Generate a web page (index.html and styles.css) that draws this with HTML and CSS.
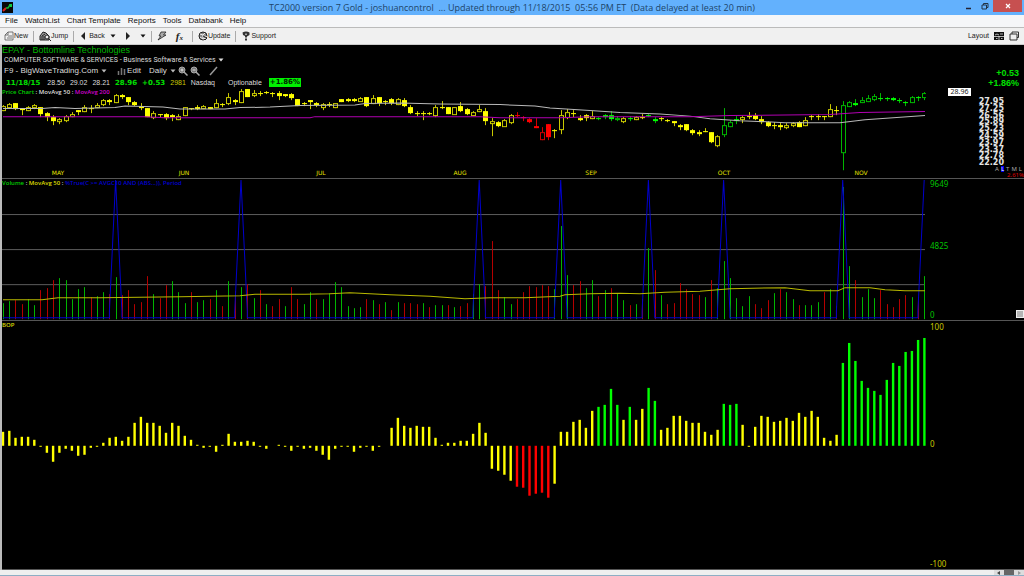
FILE: index.html
```html
<!DOCTYPE html>
<html lang="en">
<head>
<meta charset="utf-8">
<title>TC2000 version 7 Gold</title>
<link rel="stylesheet" href="styles.css">
</head>
<body>
<div class="window">
  <header class="titlebar">
    <svg class="app-icon" viewBox="0 0 11 11"><rect width="11" height="11" fill="#080808"/><path d="M1 9L4 6" stroke="#d22" stroke-width="2"/><path d="M4 6h2l2-3" stroke="#1b3" stroke-width="1.500" fill="none"/><path d="M7 2h3v3H8z" fill="#1c4"/></svg>
    <h1 class="title">TC2000 version 7 Gold - joshuancontrol &nbsp;... Updated through 11/18/2015 &nbsp;05:56 PM ET &nbsp;(Data delayed at least 20 min)</h1>
    <div class="window-buttons">
      <button class="win-btn" aria-label="Minimize"><svg viewBox="0 0 8 8"><path d="M1 6.500h5" stroke="#223" stroke-width="1.500"/></svg></button>
      <button class="win-btn" aria-label="Restore"><svg viewBox="0 0 8 8"><path d="M1 3h4.500v4H1zM2.500 3V1.500H7V5.500H5.500" fill="none" stroke="#234"/></svg></button>
      <button class="win-btn close" aria-label="Close"><svg viewBox="0 0 8 8"><path d="M2 2l4 4M6 2l-4 4" stroke="#fff" stroke-width="1.200"/></svg></button>
    </div>
  </header>

  <nav class="menubar">
    <button>File</button><button>WatchList</button><button>Chart Template</button><button>Reports</button><button>Tools</button><button>Databank</button><button>Help</button>
  </nav>

  <div class="toolbar">
    <button><svg class="ico" viewBox="0 0 10 10"><path d="M4 1h5v8H1V4zM4 1v3H1M4 5h4M3 7h5" fill="none" stroke="#555" stroke-width=".8"/></svg>New</button>
    <i class="sep"></i>
    <button><svg class="ico wide" viewBox="0 0 12 10"><path d="M1 5l3-4 3 1 3 3v4H1zM3 9V5l3-2M5 9V5" fill="#999" stroke="#222"/><circle cx="8" cy="6" r="2" fill="#eee" stroke="#222"/><path d="M9.500 7.500L12 10" stroke="#222"/></svg>Jump</button>
    <i class="sep"></i>
    <button><svg class="ico" viewBox="0 0 10 10"><path d="M6 1L2 5l4 4z" fill="#222"/></svg>Back</button>
    <button aria-label="Back history"><svg class="caret" viewBox="0 0 6 4"><path d="M.5.5h5L3 3.500z" fill="#111"/></svg></button>
    <button class="forward" aria-label="Forward"><svg class="ico" viewBox="0 0 10 10"><path d="M3 1l4 4-4 4z" fill="#222"/></svg></button>
    <button aria-label="Forward history"><svg class="caret" viewBox="0 0 6 4"><path d="M.5.5h5L3 3.500z" fill="#111"/></svg></button>
    <i class="sep"></i>
    <button aria-label="Alerts"><svg class="ico" viewBox="0 0 10 10"><path d="M4 1h5L6.500 4H9L1 9l3-4H2z" fill="#aaa" stroke="#222" stroke-width=".8"/></svg></button>
    <button class="fx" aria-label="Formula"><em>f<sub>x</sub></em></button>
    <i class="sep"></i>
    <button><svg class="ico" viewBox="0 0 10 10"><circle cx="5" cy="5" r="4" fill="#888" stroke="#222"/><path d="M2 3l3 1 2-2M2 6l3 2 3-1M5 4v4M6 5l4 1-2 3" stroke="#eee" fill="none"/><path d="M5 5l4 2-2 2" stroke="#222" fill="none"/></svg>Update</button>
    <i class="sep"></i>
    <button><svg class="ico" viewBox="0 0 10 10"><path d="M1.500 1.500Q5-.5 8.500 1.500V4L6 5.500v1H4V5L2 4z" fill="#333"/><path d="M4 3.200h2" stroke="#ddd"/><path d="M4 7.500h2v2H4z" fill="#333"/></svg>Support</button>
    <div class="toolbar-right">
      <button>Layout</button>
      <button aria-label="Layout grid"><svg class="ico" viewBox="0 0 10 10"><path d="M0 1h10v8H0z" fill="#111"/><path d="M5 5v4M0 5.500h10M1 4l2-1 2 1M6 3h3M2 7.500h1.500M7 7.500h1.500" stroke="#ddd" stroke-width=".8" fill="none"/></svg></button>
      <button aria-label="New window"><svg class="ico" viewBox="0 0 10 10"><path d="M1 3h7v6H1zM3 3V1h6.500v5.500H8" fill="none" stroke="#333"/></svg></button>
    </div>
  </div>

  <main class="workspace">
    <section class="panel price">
      <svg class="plot" id="price-plot" viewBox="2 45 924 133" preserveAspectRatio="none"></svg>
      <div class="info">
        <h2 class="company">EPAY - Bottomline Technologies</h2>
        <button class="industry">COMPUTER SOFTWARE &amp; SERVICES - Business Software &amp; Services <svg class="caret" viewBox="0 0 6 4"><path d="M.5.5h5L3 3.500z" fill="#ddd"/></svg></button>
        <div class="template-row">
          <button>F9 - BigWaveTrading.Com <svg class="caret" viewBox="0 0 6 4"><path d="M.5.5h5L3 3.500z" fill="#bbb"/></svg></button>
          <button class="edit"><svg class="ico" viewBox="0 0 10 10"><path d="M2.500 9V5M5.500 9V2M8.500 9V3" stroke="#777" stroke-width="1.500"/></svg>Edit</button>
          <button>Daily <svg class="caret" viewBox="0 0 6 4"><path d="M.5.5h5L3 3.500z" fill="#bbb"/></svg></button>
          <button aria-label="Zoom in"><svg class="ico" viewBox="0 0 10 10"><circle cx="4" cy="4" r="3" fill="#777" stroke="#aaa"/><path d="M6 6l3.500 3.500" stroke="#aaa" stroke-width="1.500"/><path d="M2.500 4h3M4 2.500v3" stroke="#ddd"/></svg></button>
          <button aria-label="Zoom out"><svg class="ico" viewBox="0 0 10 10"><circle cx="4" cy="4" r="3" fill="#777" stroke="#aaa"/><path d="M6 6l3.500 3.500" stroke="#aaa" stroke-width="1.500"/><path d="M2.500 4h3" stroke="#ddd"/></svg></button>
          <button class="draw" aria-label="Draw"><svg class="ico" viewBox="0 0 10 10"><path d="M2 9l7-8" stroke="#999" stroke-width="1.500"/></svg></button>
        </div>
        <div class="quote">
          <b class="up date">11/18/15</b><span>28.50</span><span>29.02</span><span>28.21</span><b class="up">28.96</b><b class="up">+0.53</b><span class="vol">2981</span><span>Nasdaq</span><span class="optionable">Optionable</span><b class="badge">+1.86%</b>
        </div>
        <div class="legend"><span class="green">Price Chart</span> : MovAvg 50 : <span class="magenta">MovAvg 200</span></div>
      </div>
      <div class="months" id="months"></div>
      <div class="axis price-axis">
        <div class="change"><span>+0.53</span><span>+1.86%</span></div>
        <div><span class="last">28.96</span></div>
        <div class="scale"><span>27.95</span><span>27.25</span><span>26.56</span><span>25.89</span><span>25.23</span><span>24.59</span><span>23.97</span><span>23.37</span><span>22.78</span><span>22.20</span></div>
        <div class="modes"><span>A</span><span class="on">L</span><span>T</span><span>M</span><span>L</span></div>
        <div class="pct">2.61%</div>
      </div>
    </section>

    <section class="panel volume">
      <svg class="plot" id="volume-plot" viewBox="2 179 924 141" preserveAspectRatio="none"></svg>
      <div class="legend"><span class="green">Volume</span> : <span class="yellow">MovAvg 50</span> : <span class="blue">%True(C &gt;= AVGC10 AND (ABS...)), Period</span></div>
      <div class="axis volume-axis"><span>9649</span><span class="middle">4825</span><span class="zero">0<button class="corner" aria-label="Resize pane"></button></span></div>
    </section>

    <section class="panel bop">
      <svg class="plot" id="bop-plot" viewBox="2 321 924 248" preserveAspectRatio="none"></svg>
      <div class="legend yellow">BOP</div>
      <div class="axis bop-axis"><span>100</span><span class="middle">0</span><span>-100</span></div>
    </section>
  </main>

  <footer class="scrollbar">
    <button aria-label="Scroll left"><svg viewBox="0 0 6 4"><path d="M4 0v4L1 2z" fill="#444"/></svg></button>
    <div class="thumb"></div>
    <button aria-label="Scroll right"><svg viewBox="0 0 6 4"><path d="M2 0v4l3-2z" fill="#999"/></svg></button>
  </footer>
</div>
<script src="charts.js"></script>
</body>
</html>
```

FILE: styles.css
```css
* { box-sizing: border-box; }
body { margin: 0; font-family: "Liberation Sans", Arial, sans-serif; font-size: 8px; line-height: 10px; color: #ddd; background: #000; }
button { font: inherit; color: inherit; background: none; border: 0; padding: 0; margin: 0; display: inline-flex; align-items: center; white-space: nowrap; }
h1, h2 { margin: 0; font-weight: normal; }
svg { display: block; flex: none; }
.window { height: 100vh; display: flex; flex-direction: column; }

.titlebar { display: grid; grid-template-columns: 88px 1fr 88px; height: 15px; background: #63b1fd; color: #1d4468; }
.app-icon { width: 11px; height: 11px; margin: 2px; }
.title { font-family: "Open Sans", sans-serif; font-size: 9px; line-height: 15px; text-align: center; white-space: nowrap; }
.window-buttons { display: flex; justify-content: flex-end; align-items: flex-start; padding-right: 2px; }
.win-btn { width: 16px; height: 12px; justify-content: center; }
.win-btn svg { width: 8px; height: 8px; }
.close { width: 29px; background: #c75050; }

.menubar { display: flex; gap: 7px; height: 12px; padding-left: 5px; background: #f5f6f8; color: #111; }
.toolbar { display: flex; align-items: center; gap: 5px; height: 18px; padding: 0 5px 0 4px; background: #f0f0f0; border-top: 1px solid #bbb; border-bottom: 1px solid #ccc; color: #222; font-size: 7px; }
.ico { width: 10px; height: 10px; }
.wide { width: 12px; }
.caret { width: 6px; height: 4px; }
.sep { width: 1px; height: 11px; background: #aaa; }
.forward { margin: 0 2px; }
.fx { font-family: "Liberation Serif", serif; font-size: 11px; font-weight: bold; padding: 0 4px; }
.fx sub { font-size: 7px; line-height: 0; vertical-align: baseline; }
.toolbar-right { display: flex; align-items: center; gap: 5px; margin-left: auto; }

.workspace { flex: 1; min-height: 0; display: flex; flex-direction: column; border-left: 2px solid #bbb; background: #000; }
.panel { display: grid; grid-template-columns: minmax(0, 1fr) 98px; grid-template-rows: minmax(0, 1fr); min-height: 0; border-bottom: 1px solid #555; }
.panel > * { grid-area: 1 / 1; }
.panel > .axis { grid-area: 1 / 2; }
.price { flex: 134 1 0; }
.volume { flex: 142 1 0; }
.bop { flex: 249 1 0; }
.plot { width: 100%; height: 100%; }

.info { z-index: 1; }
.company { font-size: 9px; line-height: 10px; color: #00b400; }
.industry { display: flex; gap: 2px; height: 10px; padding-left: 2px; font-family: Roboto, sans-serif; font-size: 7px; }
.template-row { display: flex; align-items: center; height: 12px; gap: 2px; padding-left: 2px; }
.template-row button { gap: 3px; }
.template-row .edit { gap: 1px; margin: 0 6px 0 7px; }
.template-row .draw { margin-left: 6px; }
.quote { display: flex; align-items: center; gap: 5px; height: 11px; padding-left: 4px; font-size: 7px; }
.quote b { font-family: "DejaVu Sans", sans-serif; }
.date { margin-right: 2px; }
.up { color: #00e000; }
.vol { color: #c8c800; }
.optionable { padding-left: 8px; }
.quote .badge { margin-left: 2px; background: #00f000; color: #020; line-height: 9px; padding: 0 1px; }
.legend { font-family: "Open Sans", sans-serif; font-size: 6px; line-height: 9px; z-index: 1; white-space: nowrap; font-weight: 600; }
.green { color: #00d000; }
.magenta { color: #d000d0; }
.yellow { color: #dcdc00; }
.blue { color: #0000d0; }
.months { position: relative; align-self: end; height: 10px; font-family: "DejaVu Sans", sans-serif; font-size: 6px; line-height: 10px; color: #e4e400; }
.months span { position: absolute; transform: translateX(-50%); }

.axis { font-family: "Noto Sans", sans-serif; font-size: 8px; }
.price-axis { display: flex; flex-direction: column; padding-top: 23px; }
.change { display: flex; flex-direction: column; align-items: flex-end; padding-right: 5px; color: #00e000; font-family: "Liberation Sans", sans-serif; font-weight: bold; font-size: 9px; }
.last { display: block; width: 23px; margin-left: 22px; background: #fff; color: #222; font-size: 7px; line-height: 8px; text-align: center; }
.scale { flex: 1; min-height: 0; display: flex; flex-direction: column; align-items: flex-end; justify-content: space-between; padding: 3px 20px 0 0; color: #e4e4e4; font-family: "DejaVu Sans", sans-serif; font-size: 8px; font-weight: bold; line-height: 6px; }
.modes { display: flex; justify-content: flex-end; gap: 2px; padding-right: 2px; font-size: 6px; line-height: 6px; color: #aaa; }
.on { background: #0000f0; color: #fff; }
.pct { font-size: 6px; line-height: 6px; text-align: right; color: #e00000; }
.volume-axis { display: flex; flex-direction: column; justify-content: space-between; padding-left: 4px; color: #00c400; }
.volume-axis .middle { margin-bottom: 8px; }
.zero { display: flex; justify-content: space-between; }
.corner { width: 8px; height: 8px; background: #b4b4b4; border: 1px solid #eee; }
.bop-axis { display: flex; flex-direction: column; justify-content: space-between; padding: 1px 0 0 4px; color: #c8c800; }
.bop-axis .middle { margin-bottom: 4px; }

.scrollbar { display: flex; justify-content: flex-end; height: 6px; background: #efefef; border-bottom: 1px solid #8eaec4; }
.scrollbar button { width: 10px; justify-content: center; background: #ddd; }
.scrollbar svg { width: 6px; height: 4px; }
.thumb { width: 10px; background: #666; }
```

FILE: charts.js
```js
const STEP = 6.268;
const COUNT = 148;
const x = i => +(2.8 + i * STEP).toFixed(1);
const COLORS = { y: '#ffff00', g: '#00ff00', r: '#ff0000' };
const OUTLINES = { y: '#c8c800', g: '#00b400', r: '#d00000' };

const range = (a, b) => Array.from({ length: b - a + 1 }, (_, k) => a + k);
const rect = (left, top, w, h, fill) => `<rect x="${left}" y="${top}" width="${w}" height="${h}" fill="${fill}"/>`;
const line = (points, color) => `<polyline points="${points}" fill="none" stroke="${color}"/>`;

// Each candle: h (hollow) or f (filled), body top, body bottom, high, low.
const candles = `h106,110,105,111 h104,107,103,108 f103,109,103,110 f108,110,108,115 h107,110,106,111 h105,107,104,109
f107,114,107,117 f113,117,112,121 f117,121,115,125 h119,121,118,124 h116,120,115,122 h114,116,112,117 f110,112,110,115
h107,111,105,112 f108,109,105,113 h105,107,103,108 h100,104,99,106 f100,102,99,105 h95,102,94,103 f95,97,94,99
f97,102,97,105 f102,105,101,106 f106,108,103,110 f108,117,108,117 h113,117,111,119 f114,115,114,117 f114,118,113,120
f115,117,114,121 h116,119,114,120 h107,115,107,116 f108,109,108,110 f107,109,105,110 h106,108,105,109 f107,109,107,109
h103,107,99,108 f104,105,103,107 h97,103,93,105 f100,102,99,105 h91,102,89,103 f89,97,89,97 h93,95,90,97
f93,94,91,96 f92,93,91,94 f93,94,92,97 f93,96,91,100 f94,96,94,97 f94,98,93,100 f99,106,99,106
f103,104,102,106 f100,102,100,109 f103,105,102,107 h104,107,103,110 f104,105,102,107 h103,107,103,108 f99,102,99,102
f99,101,98,102 f99,101,98,102 h98,101,97,101 f97,106,97,107 h98,103,95,104 f97,103,97,106 f101,102,100,105
f99,103,98,105 h99,104,98,105 f100,106,98,107 f107,113,105,114 f113,114,111,116 f113,114,111,120 f113,114,112,115
h107,115,105,117 f107,108,101,109 f107,114,107,114 h107,114,107,114 f106,111,102,112 f109,114,108,115 h112,115,111,116
h109,111,105,112 f111,121,108,125 h121,123,118,136 f122,126,121,127 h120,126,119,126 h115,122,114,124 f115,116,112,117
f117,118,116,121 f119,122,118,123 f126,128,118,128 h132,139,127,140 f124,137,124,140 f130,131,129,138 h115,129,110,134
h112,117,109,119 f113,114,110,117 f118,120,115,121 f115,118,114,121 h116,118,111,119 f118,119,117,120 f115,117,114,119
f115,119,111,121 h118,119,116,121 h118,121,117,123 f118,119,116,121 h117,119,116,120 f117,118,114,119 f115,116,114,117
f119,121,117,123 f118,119,117,121 f120,121,119,122 f121,123,121,126 f125,127,124,130 f124,130,124,131 f130,133,129,135
f132,134,130,136 f131,132,128,132 f132,142,132,143 h136,145,135,147 h125,134,108,137 h122,126,120,127 f119,121,116,124
h117,119,116,123 f116,117,112,119 f115,119,113,120 f119,122,116,124 f122,126,121,127 f125,126,122,129 f125,127,122,130
h125,127,123,129 h123,125,122,127 f122,127,121,127 h120,125,117,126 f116,117,115,120 f116,117,114,120 f116,117,116,120
h109,116,104,117 f110,111,106,115 h105,152,101,170 h102,106,101,107 f103,105,99,106 h100,102,97,103 h98,101,95,102
h96,99,94,101 f98,99,93,101 f98,99,97,101 f98,100,97,101 f100,101,98,103 f102,103,101,106 h97,102,96,103
f97,98,96,101 h93,97,92,100`.split(/\s+/);

const redDays = new Set(range(82, 87));
const greenDays = new Set([95, 96, 97, 98, 100, 103, 104, 115, 116, 117, ...range(134, 147)]);
const dayColor = i => redDays.has(i) ? 'r' : greenDays.has(i) ? 'g' : 'y';

function drawPrice() {
  let out = '';
  candles.forEach((text, i) => {
    const [top, bottom, high, low] = text.slice(1).split(',').map(Number);
    const key = dayColor(i);
    const cx = Math.round(x(i));
    out += rect(cx, high, 1, low - high, OUTLINES[key]);
    out += text[0] === 'h'
      ? `<rect x="${cx - 1.5}" y="${top + 0.5}" width="4" height="${bottom - top}" fill="#000" stroke="${OUTLINES[key]}"/>`
      : rect(cx - 2, top, 5, bottom - top, COLORS[key]);
  });
  out += line('3,108.500 42,108.500 55,107.500 75,108.500 115,107.500 125,106 163,107 180,109 225,109 240,107.500 270,107 300,105.500 355,105 365,103.500 400,103 440,104 500,104.500 535,106 550,108 590,110.500 620,112.500 660,114 690,116 710,118.500 740,120.500 785,122.500 840,122.500 865,119.500 925,115.500', '#b8b8b8');
  out += line('3,116.500 145,116.500 165,117.500 310,117.500 315,116.500 480,116.500 500,117.500 560,117.500 590,116.500 690,116.500 730,115.500 830,114.500 860,112.500 925,111.500', '#b000b0');
  document.getElementById('price-plot').innerHTML = out;
}

const volume = `16g 18g 19r 15r 20g 14g 29r 31r 39r 41g 39g 20g 30g 32g 22r 23g 27g 25r 42g 24r 29r 15r 17r 43r 25g 21r 34r 38g 27g 16g
27r 17g 19g 20r 29g 13r 38g 28r 32g 35r 21g 29r 15g 13r 20r 13g 32r 20r 15g 27g 20r 20g 26g 37g 32g 13g 11g 12g 20r 19g
15r 17g 9r 17g 16r 16r 15r 16g 12r 14g 14g 14r 12g 13r 16r 25g 35g 33r 78r 29r 22g 15g 20r 27r 33r 32r 34r 33r 30g 93g
44g 34r 38r 31g 39g 23r 29g 31r 26g 19g 14r 15g 20r 71g 49r 24g 15r 16r 36r 30r 25r 24r 22g 39r 31g 58g 41g 21g 13g 23g
15r 11r 19r 26g 30r 27g 20g 14r 14g 14g 17g 27r 30g 13r 132g 53g 39r 22g 30g 21g 29r 15r 12r 20r 24r 22g 22r 43g`.split(/\s+/);
const peaks = [18, 38, 76, 89, 103, 115, 134, 147];

function drawVolume() {
  let out = [214, 249, 284].map(y => rect(2, y, 923, 1, '#5c5c5c')).join('');
  volume.forEach((text, i) => {
    const h = parseInt(text, 10);
    out += rect(Math.round(x(i)), 319 - h, 1, h, text.endsWith('g') ? '#00b400' : '#b40000');
  });
  const points = ['3,317.500'];
  peaks.forEach(i => {
    points.push(`${x(i - 1)},317.500`, `${x(i - 1)},311`, `${x(i)},180`);
    if (i < COUNT - 1) points.push(`${x(i + 1)},311`, `${x(i + 1)},317.500`);
  });
  out += line(points.join(' '), '#0000cc');
  out += line('3,299.500 42,299.500 58,297.500 100,297.500 180,296.500 240,295.500 255,294 305,294 330,293.500 350,292.500 390,294.500 430,296 465,298.500 490,297.500 525,297.500 560,296 565,294.500 590,293.500 620,293 640,293.500 665,292 700,291 730,288.500 785,287.500 810,290.500 838,290.500 845,287.500 870,287.500 885,289.500 905,290.500 925,290.500', '#b8b800');
  document.getElementById('volume-plot').innerHTML = out;
}

const bop = [14, 15, 8, 9, 9, 6, -1, -7, -16, -7, -3, -5, -10, -9, -2, -1, 3, 8, 9, 5, 9, 23, 29, 23, 23, 20, 13, 23, 20, 10, 6, 1, -2, -1, -6, 1, 12, 4, 4, 5,
  4, -1, -3, 0, 1, -1, -5, -1, -3, -2, -5, -9, -14, -3, -1, -1, -6, -2, -1, -5, -1, 0, 18, 28, 20, 18, 20, 19, 19, 8, 1, 3, 3, 5, 5, 12, 23, 13, -23, -25,
  -29, -35, -41, -42, -50, -48, -47, -52, -38, 14, 14, 24, 26, 18, 35, 39, 41, 57, 41, 26, 39, 26, 37, 58, 45, 16, 18, 30, 30, 25, 23, 23, 14, 11, 16, 42, 41, 42, 21, -1,
  19, 30, 29, 24, 25, 28, 25, 33, 29, 35, 29, 8, 5, 11, 83, 103, 85, 65, 58, 55, 51, 66, 83, 80, 94, 95, 106, 108];

function drawBop() {
  document.getElementById('bop-plot').innerHTML = bop.map((v, i) =>
    rect(+(x(i) - 1).toFixed(1), v > 0 ? 446 - v : 446, 2.4, Math.abs(v), COLORS[dayColor(i)])
  ).join('');
}

const months = { MAY: 58, JUN: 184, JUL: 321, AUG: 460, SEP: 591, OCT: 724, NOV: 861 };
document.getElementById('months').innerHTML = Object.entries(months)
  .map(([name, px]) => `<span style="left:${((px - 2) / 924 * 100).toFixed(2)}%">${name}</span>`).join('');

drawPrice();
drawVolume();
drawBop();
```
